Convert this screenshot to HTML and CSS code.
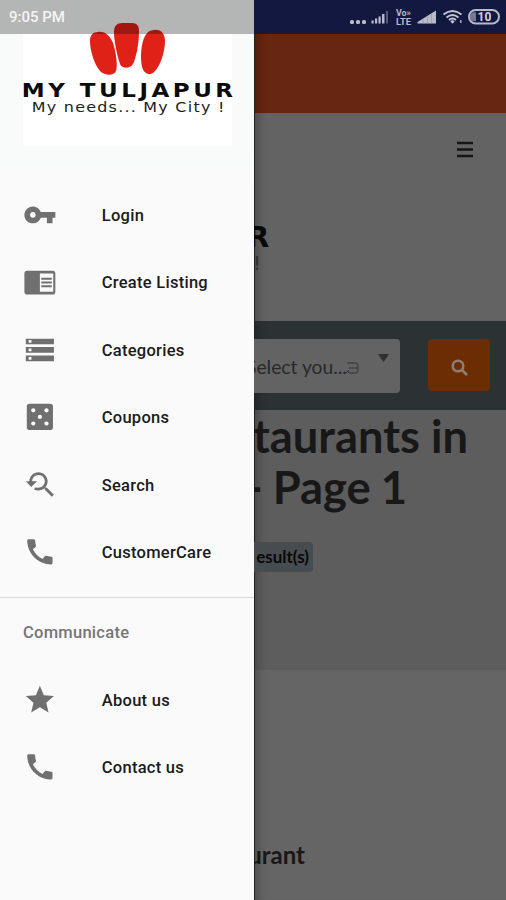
FILE: index.html
```html
<!DOCTYPE html>
<html lang="en">
<head>
<meta charset="utf-8">
<title>My Tuljapur</title>
<link rel="stylesheet" href="styles.css">
</head>
<body>
<div class="screen">
  <header class="status">
    <time class="status-time">9:05 PM</time>
    <svg class="status-icons" width="152" height="18" viewBox="0 0 152 18">
      <g fill="#b9bbc9">
        <rect x="0" y="12" width="4" height="4" rx="1.500"/><rect x="6" y="12" width="4" height="4" rx="1.500"/><rect x="12" y="12" width="4" height="4" rx="1.500"/>
        <rect x="21.500" y="12.500" width="2.200" height="3"/><rect x="25" y="10.500" width="2.200" height="5"/><rect x="28.500" y="8.500" width="2.200" height="7"/><rect x="32" y="6" width="2.500" height="9.500"/><rect x="36" y="3" width="2" height="12.500" fill="#55597a"/>
        <path d="M67.500 15.500V14L86 2.500v13z"/>
        <path d="M73 10.500v5M77.500 8.500v7M81.500 6v9.500" stroke="#8d90a8" stroke-width=".6"/>
        <text class="volte" x="46" y="8" textLength="15" lengthAdjust="spacingAndGlyphs">Vo»</text>
        <text class="volte" x="46" y="16.500" textLength="15" lengthAdjust="spacingAndGlyphs">LTE</text>
      </g>
      <g fill="none" stroke="#c3c5d1" stroke-width="1.800">
        <path d="M93.500 6.500q9-7 18 0M96.500 9.500q6-5 12 0M99 12q3.500-3 7 0"/>
      </g>
      <path d="M100.300 13.200q2.200-1.700 4.400 0L102.500 15.800z" fill="#c3c5d1"/><rect x="110" y="12" width="1.500" height="3" fill="#aaa"/>
      <rect x="119" y="2" width="30" height="13.500" rx="6.700" fill="none" stroke="#b7b9c7" stroke-width="2"/>
      <path d="M126 4.200h-1.500a4.500 4.500 0 0 0 0 9h1.500z" fill="#b7b9c7" opacity=".6"/>
      <text class="battery" x="134.500" y="13" text-anchor="middle">10</text>
    </svg>
  </header>

  <aside class="drawer">
    <div class="brand">
      <svg width="209" height="112" viewBox="0 0 209 112">
        <g fill="#df2118">
          <path d="M75-2C82-3 87 2 90 9C93 18 95 32 93 37C91 42 82 42 77 37C71 30 67 16 67 7C67 1 70-2 75-2z"/>
          <path d="M99-11H109C114-11 116-8 116-3C116 10 113 24 110 30C107 35 99 35 97 30C94 21 91 7 91-2C91-8 94-11 99-11z"/>
          <path d="M131-4C138-5 142 0 142 7C142 18 137 33 131 38C127 42 121 40 119 33C117 24 118 9 122 2C124-2 127-4 131-4z"/>
        </g>
        <g transform="scale(1.18 1)"><text class="brand-name" x="-1" y="63" textLength="179" lengthAdjust="spacing">MY TULJAPUR</text></g>
        <g transform="scale(1.1 1)"><text class="brand-tag" x="8" y="78.500" textLength="175" lengthAdjust="spacing">My needs... My City !</text></g>
      </svg>
    </div>
    <nav class="menu">
      <a class="item"><svg class="icon" viewBox="0 0 24 24"><path d="M12.650 10C11.830 7.670 9.610 6 7 6c-3.310 0-6 2.690-6 6s2.690 6 6 6c2.610 0 4.830-1.670 5.650-4H17v4h4v-4h2v-4H12.650zM7 14c-1.100 0-2-.9-2-2s.9-2 2-2 2 .9 2 2-.9 2-2 2z"/></svg>Login</a>
      <a class="item"><svg class="icon" viewBox="0 0 24 24"><path fill-rule="evenodd" d="M3 4h18a2 2 0 0 1 2 2v13a2 2 0 0 1-2 2H3a2 2 0 0 1-2-2V6a2 2 0 0 1 2-2zM12 6v13h9.500V6zM13 9h7.500v1.400H13zM13 11.700h7.500v1.400H13zM13 14.400h7.500v1.400H13z"/></svg>Create Listing</a>
      <a class="item"><svg class="icon" viewBox="0 0 24 24"><path d="M2 20h20v-4H2v4zm2-3h2v2H4v-2zM2 4v4h20V4H2zm4 3H4V5h2v2zm-4 7h20v-4H2v4zm2-3h2v2H4v-2z"/></svg>Categories</a>
      <a class="item"><svg class="icon" viewBox="0 0 24 24"><rect x="2.700" y="2.700" width="18.600" height="18.600" rx="2"/><g class="pips"><circle cx="7.300" cy="7.300" r="1.500"/><circle cx="16.700" cy="7.300" r="1.500"/><circle cx="12" cy="12" r="1.500"/><circle cx="7.300" cy="16.700" r="1.500"/><circle cx="16.700" cy="16.700" r="1.500"/></g></svg>Coupons</a>
      <a class="item"><svg class="icon" viewBox="0 0 24 24"><path d="M17.010 14h-.8l-.27-.27c.98-1.140 1.570-2.610 1.570-4.230 0-3.590-2.910-6.500-6.500-6.500s-6.500 3-6.500 6.500H2l3.840 4 4.160-4H6.510C6.510 7 8.530 5 11.010 5s4.500 2.010 4.500 4.500c0 2.480-2.020 4.500-4.500 4.500-.65 0-1.260-.14-1.820-.38L7.710 15.100c.97.57 2.090.9 3.300.9 1.610 0 3.080-.59 4.220-1.570l.27.27v.79l5.010 4.990L22 19l-4.990-5z"/></svg>Search</a>
      <a class="item"><svg class="icon" viewBox="0 0 24 24"><path d="M20.010 15.380c-1.230 0-2.420-.2-3.530-.56-.35-.12-.74-.03-1.010.24l-1.570 1.970c-2.830-1.350-5.480-3.900-6.890-6.830l1.950-1.660c.27-.28.35-.67.24-1.020-.37-1.110-.56-2.300-.56-3.530 0-.54-.45-.99-.99-.99H4.190C3.650 3 3 3.240 3 3.990 3 13.280 10.730 21 20.010 21c.71 0 .99-.63.99-1.180v-3.450c0-.54-.45-.99-.99-.99z"/></svg>CustomerCare</a>
    </nav>
    <section class="group">
      <h2 class="group-title">Communicate</h2>
      <a class="item"><svg class="icon" viewBox="0 0 24 24"><path d="M12 17.270L18.180 21l-1.640-7.030L22 9.240l-7.190-.61L12 2 9.190 8.630 2 9.240l5.460 4.730L5.820 21z"/></svg>About us</a>
      <a class="item"><svg class="icon" viewBox="0 0 24 24"><path d="M20.010 15.380c-1.230 0-2.420-.2-3.530-.56-.35-.12-.74-.03-1.010.24l-1.570 1.970c-2.830-1.350-5.480-3.900-6.890-6.830l1.950-1.660c.27-.28.35-.67.24-1.020-.37-1.110-.56-2.300-.56-3.530 0-.54-.45-.99-.99-.99H4.190C3.650 3 3 3.240 3 3.990 3 13.280 10.730 21 20.010 21c.71 0 .99-.63.99-1.180v-3.450c0-.54-.45-.99-.99-.99z"/></svg>Contact us</a>
    </section>
  </aside>

  <main class="page">
    <div class="topbar"></div>
    <div class="masthead">
      <svg class="burger" width="16" height="17" viewBox="0 0 16 17"><path d="M0 2h16M0 8.500h16M0 15h16"/></svg>
      <div class="site-logo"><b>R</b><span>!</span></div>
    </div>
    <div class="searchbar">
      <div class="select">
        <span class="select-text">Select you...</span>
        <svg class="select-box" width="13" height="14" viewBox="0 0 13 14"><path d="M0 12L3 9M1 2h9q2 0 2 2v6q0 2-2 2H4q-2 0-2-2M3 7h9"/></svg>
        <svg class="caret" width="11" height="8" viewBox="0 0 11 8"><path d="M0 0h11L5.500 8z"/></svg>
      </div>
      <button class="go"><svg width="17" height="17" viewBox="0 0 17 17"><circle cx="7" cy="7" r="5.300"/><path d="M11 11l5 5"/></svg></button>
    </div>
    <div class="hero">
      <h1><span class="line-one">taurants in</span><span class="line-two">- Page 1</span></h1>
      <span class="badge">esult(s)</span>
    </div>
    <div class="results"><h3>urant</h3></div>
  </main>
</div>
</body>
</html>
```
FILE: styles.css
```css
* { box-sizing: border-box; }
body { margin: 0; font-family: Roboto, sans-serif; }
.screen {
  position: relative;
  display: grid;
  grid-template-columns: 254px 252px;
  width: 506px;
  height: 900px;
  overflow: hidden;
}

/* Status bar, laid over the drawer and the page */
.status {
  position: absolute;
  inset: 0 0 auto 0;
  z-index: 2;
  height: 34px;
  padding: 0 4px 0 9px;
  display: flex;
  align-items: center;
  justify-content: space-between;
  background: linear-gradient(90deg, rgba(0, 0, 0, .28) 254px, #12183f 254px);
}
.status-icons { overflow: visible; }
.status-time { color: #f4f4f4; font-size: 15px; font-weight: 500; line-height: 36px; }
.volte { font: 700 8.500px Roboto, sans-serif; }
.battery { font: 700 12px Roboto, sans-serif; fill: #d0d1dc; }

/* Drawer */
.drawer { background: #fafafa; }
.brand { height: 181.500px; padding: 34px 0 0 23px; background: linear-gradient(#f9fbfa 150px, #fafafa); }
.brand svg { display: block; overflow: visible; background: #fff; }
.brand-name { font: 700 19.500px "DejaVu Sans", sans-serif; fill: #0b0b0b; }
.brand-tag { font: 400 14.500px "DejaVu Sans", sans-serif; fill: #222; }
.item {
  display: flex;
  align-items: center;
  gap: 45px;
  height: 67.500px;
  padding-left: 23px;
  color: #1b1b1b;
  font-size: 16.500px;
  font-weight: 500;
  letter-spacing: .27px;
}
.icon { width: 33.750px; height: 33.750px; flex: none; margin-top: -1px; fill: #707070; }
.pips { fill: #fafafa; }
.menu { height: 415.500px; }
.group { border-top: 1px solid #d6d6d6; }
.group-title {
  margin: 0;
  height: 68.500px;
  padding-left: 23px;
  color: #757575;
  font-size: 16.500px;
  font-weight: 500;
  line-height: 70px;
  letter-spacing: .27px;
}

/* Dimmed page behind the drawer */
.page {
  min-width: 0;
  overflow: hidden;
  display: flex;
  flex-direction: column;
  background: #656565;
  color: #181818;
  font-family: Lato, sans-serif;
}
.page > * { flex: none; box-shadow: inset 1px 0 #222, inset 12px 0 10px -8px rgba(0, 0, 0, .25); }
.topbar { height: 113px; background: #672611; }
.masthead { height: 208px; background: #636363; padding-top: 28px; }
.burger { display: block; margin-left: 203px; stroke: #151515; stroke-width: 2.700; }
.site-logo {
  display: flex;
  flex-direction: column;
  margin-top: 63px;
  font-family: "DejaVu Sans", sans-serif;
  color: #080808;
}
.site-logo b { margin-left: -7px; font-size: 29px; line-height: 32px; }
.site-logo span { margin-left: -1px; font-size: 20px; line-height: 20px; color: #303030; }
.searchbar { display: flex; height: 89px; padding: 18px 16px 0 0; justify-content: space-between; background: #2c3133; }
.select {
  display: flex;
  width: 146px;
  height: 54px;
  padding-right: 11px;
  border-radius: 0 4px 4px 0;
  background: #636363;
  align-items: center;
  overflow: hidden;
}
.select-text { margin-left: -8px; font-size: 19.300px; color: #292929; white-space: nowrap; }
.select-box { flex: none; fill: none; stroke: #353535; margin: 4px 0 0 -1px; }
.caret { flex: none; margin: -16px 0 0 auto; fill: #303030; }
.go {
  display: grid;
  place-items: center;
  width: 62px;
  height: 52px;
  padding: 4px 0 0;
  border: 0;
  border-radius: 4px;
  background: #6d2d03;
}
.go svg { fill: none; stroke: #8d7d74; stroke-width: 2.600; }
.hero { height: 260px; background: #5d5d5d; }
h1 { margin: 0; font-size: 45.300px; line-height: 51px; font-weight: 700; white-space: nowrap; }
h1 span { display: flex; justify-content: flex-end; }
.line-one { padding-right: 38px; }
.line-two { padding-right: 99px; word-spacing: -1px; }
.badge {
  display: block;
  width: 59px;
  height: 30px;
  margin-top: 30px;
  padding-right: 4px;
  border-radius: 0 4px 4px 0;
  background: #474c50;
  color: #080808;
  font-size: 17px;
  line-height: 30px;
  font-weight: 700;
  text-align: right;
}
.results { flex: 1; padding-top: 170px; background: #656565; }
h3 { margin: 0; padding-right: 201px; display: flex; justify-content: flex-end; font-size: 24px; line-height: 30px; }
```
